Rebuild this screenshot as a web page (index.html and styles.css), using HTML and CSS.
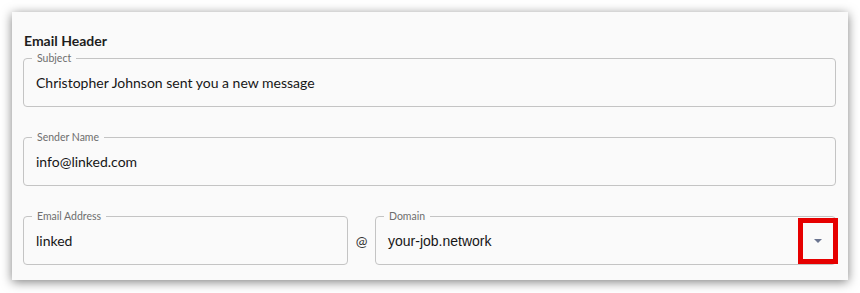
FILE: index.html
```html
<!DOCTYPE html>
<html lang="en">
<head>
<meta charset="utf-8">
<title>Email Header</title>
<link rel="stylesheet" href="styles.css">
</head>
<body>
<div class="card">
  <h2 class="title">Email Header</h2>
  <div class="field">
    <span class="label">Subject</span>
    <span class="value">Christopher Johnson sent you a new message</span>
  </div>
  <div class="field">
    <span class="label">Sender Name</span>
    <span class="value">info@linked.com</span>
  </div>
  <div class="row">
    <div class="field">
      <span class="label">Email Address</span>
      <span class="value">linked</span>
    </div>
    <span class="at">@</span>
    <div class="field select">
      <span class="label">Domain</span>
      <span class="value alt">your-job.network</span>
      <span class="arrow"></span>
      <span class="highlight"></span>
    </div>
  </div>
</div>
</body>
</html>
```
FILE: styles.css
```css
html, body {
  margin: 0;
  padding: 0;
  background: #ffffff;
}
body {
  padding: 12px 12px 13px 12px;
  font-family: Lato, "Noto Sans", sans-serif;
  color: #1f1f1f;
}
.card {
  width: 836px;
  height: 268px;
  box-sizing: border-box;
  background: #fafafa;
  box-shadow: 0 2px 10px rgba(0, 0, 0, 0.5);
  padding: 0 12px 0 11px;
  display: flex;
  flex-direction: column;
}
.title {
  margin: 0;
  padding: 19px 0 0 1px;
  height: 46px;
  box-sizing: border-box;
  font-size: 14px;
  line-height: 20px;
  font-weight: 700;
  color: #1e1e1e;
}
.field {
  position: relative;
  height: 49px;
  box-sizing: border-box;
  border: 1px solid #c4c4c4;
  border-radius: 4px;
  display: flex;
  align-items: center;
  padding: 0 12px;
  margin-bottom: 30px;
}
.label {
  position: absolute;
  left: 8px;
  top: -7px;
  padding: 0 5px;
  background: #fafafa;
  font-size: 10.5px;
  line-height: 12px;
  color: #6e6e6e;
}
.value {
  font-size: 14px;
  color: #161616;
}
.value.alt {
  font-family: "Liberation Sans", Arial, sans-serif;
  font-size: 14px;
}
.row {
  display: grid;
  grid-template-columns: 325px 27px 1fr;
}
.row .field {
  margin-bottom: 0;
}
.at {
  display: flex;
  align-items: center;
  justify-content: center;
  font-size: 14px;
  color: #333;
}
.arrow {
  position: absolute;
  right: 13px;
  top: 22px;
  width: 0;
  height: 0;
  border-left: 4.5px solid transparent;
  border-right: 4.5px solid transparent;
  border-top: 4.5px solid #6b7590;
}
.highlight {
  position: absolute;
  right: -3px;
  top: 1px;
  width: 40px;
  height: 46px;
  box-sizing: border-box;
  border: 5px solid #e60000;
}
```
